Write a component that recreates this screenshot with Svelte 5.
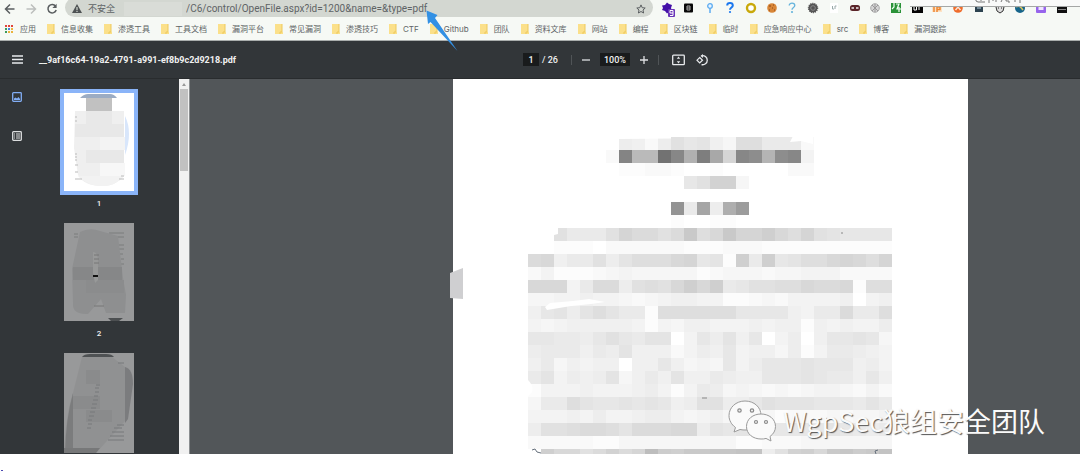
<script>
  const bookmarks = [
    '信息收集', '渗透工具', '工具文档', '漏洞平台', '常见漏洞', '渗透技巧', 'CTF', 'Github',
    '团队', '资料文库', '网站', '编程', '区块链', '临时', '应急响应中心', 'src', '博客', '漏洞跟踪'
  ];

  const appDots = ['#e0433a', '#e0433a', '#e0433a', '#3c9a5c', '#4a7fe0', '#eab33c', '#3c9a5c', '#eab33c', '#eab33c'];

  // Each character is a grey level; the step from one level to the next is 3.
  const levels = '0123456789abcdefghijklmnopqrstuvwxyzABCDEFGHIJKLMNOP';
  const CELL = 13;
  const rows = [
    '00000006526a8953bb7772000000',
    '0000002FnnLEqHteECpCE4000000',
    '0000000112210010000022000000',
    '0000000000008aff300000000000',
    '0000000000000000000000000000',
    '00000000000A7u6rx00000000000',
    '0000000000010011000000000000',
    '00a777aeccacibdieegdbea98888',
    '0011102222221112221111111111',
    'cd577a69bbbde891g7g89bbdedbe',
    '2411123433333123332334442222',
    'ddd47cc6abadgdg78aabbdccd1bb',
    '3344544323455441123244445045',
    '58969b9771bbbbbb88885477c77b',
    '4345555541435544454551545446',
    '887768a879904869580460588983',
    '6777576955524658455361477654',
    '5735455055853438468889888564',
    '7946569357595576558889877585',
    '1444544456414763432323443242',
    '377b988989856aa668a999888797',
    '4445464456643453213122232334',
    '6aabccb9cccdd698987888898767',
    '2222211333333333112223333333',
    '0gddacfcemhgiijjkk6afgdijhik'
  ];
  const cells = rows.flatMap((row, r) =>
    [...row]
      .map((c, i) => ({ x: 75 + i * CELL, y: 58 + r * CELL, v: 255 - 3 * levels.indexOf(c) }))
      .filter((c) => c.v < 255)
  );

  const extensions = [
    'tag', 'black', 'pin', 'help', 'ring', 'cookie', 'help2', 'gear', 'doc', 'mask',
    'globe', 'green', 'code', 'ip', 'fox', 'box', 'bug', 'swirl', 'purple', 'bar'
  ];
</script>

<div class="window">
  <header class="chrome">
    <div class="toolbar">
      <nav class="nav" aria-label="导航">
        <button aria-label="后退"><svg width="12" height="12" viewBox="0 0 12 12"><path d="M10.500 6H2M6 1.500 1.500 6 6 10.500" fill="none" stroke="#5a5e60" stroke-width="1.500" /></svg></button>
        <button aria-label="前进"><svg width="12" height="12" viewBox="0 0 12 12"><path d="M1.500 6H10M6 1.500 10.500 6 6 10.500" fill="none" stroke="#bcbfbd" stroke-width="1.500" /></svg></button>
        <button aria-label="刷新"><svg width="12" height="12" viewBox="0 0 12 12"><path d="M9.600 3.200A4.200 4.200 0 1 0 10.200 7" fill="none" stroke="#5a5e60" stroke-width="1.500" /><path d="M10.600.8v4.200H6.400z" fill="#5a5e60" /></svg></button>
      </nav>
      <div class="address">
        <svg width="10" height="9" viewBox="0 0 10 9"><path d="M5 0 10 9H0z" fill="#4d5153" /><path d="M4.400 3h1.200v3H4.400zM4.400 6.700h1.200v1.200H4.400z" fill="#d3d7d1" /></svg>
        <label for="url">不安全</label>
        <i class="smudge"></i>
        <input id="url" value="/C6/control/OpenFile.aspx?id=1200&name=&type=pdf" />
        <button class="star" aria-label="收藏"><svg width="10" height="10" viewBox="0 0 10 10"><path d="M5 .9 6.200 3.700l3 .3L7 6l.6 3L5 7.500 2.400 9 3 6 .8 4l3-.3z" fill="none" stroke="#5a5e60" /></svg></button>
      </div>
      <div class="extensions">
        {#each extensions as e}
          <button aria-label={e}>
            <svg width="16" height="17" viewBox="0 0 16 17">
              {#if e === 'tag'}
                <path d="M7 2.500 9 4l3 1-1 3 1 3-3 1-2 1.500L5 11 2 10l1-2-1-2.500L5 5z" fill="#4310a8" /><rect x="8" y="9" width="7" height="8" rx="1" fill="#6a36b8" /><path d="M13 13V10.500h-3V13h3v2.500h-3" fill="none" stroke="#fff" />
              {:else if e === 'black'}
                <rect x="3" y="3.500" width="9" height="9" rx="1" fill="#080808" /><path d="M6 6h3v4H6zM6 8h3" fill="none" stroke="#aaa" />
              {:else if e === 'pin'}
                <circle cx="8" cy="6" r="2.300" fill="#e8f4ff" stroke="#5cabf0" stroke-width="1.300" /><path d="M8 8.500V13" stroke="#5cabf0" stroke-width="1.500" />
              {:else if e === 'help' || e === 'help2'}
                <path d="M5.200 5.500C5.200 2.300 10.800 2.300 10.800 5.500 10.800 7.500 8 7.500 8 9.800" fill="none" stroke={e === 'help' ? '#1b77ee' : '#66b4dc'} stroke-width={e === 'help' ? 2 : 1.3} /><circle cx="8" cy="12" r="1.100" fill={e === 'help' ? '#1b77ee' : '#66b4dc'} />
              {:else if e === 'ring'}
                <circle cx="8" cy="8" r="4" fill="#fff" stroke="#c9a90b" stroke-width="2.400" />
              {:else if e === 'cookie'}
                <circle cx="8" cy="8" r="4.800" fill="#d88638" /><path d="M5 6h2M9 5h1M8 8h1M5 10h1M10 10h1" stroke="#8a4717" stroke-width="1.200" />
              {:else if e === 'gear'}
                <circle cx="8" cy="8" r="4.500" fill="#555" stroke="#555" stroke-dasharray="1 1" stroke-width="1.500" /><circle cx="8" cy="8" r="2.300" fill="none" stroke="#8a8a8a" />
              {:else if e === 'doc'}
                <rect x="4" y="3" width="8" height="10" fill="#fff" /><path d="M6.500 6v3H8M9 9V6h1.500" fill="none" stroke="#9aa" />
              {:else if e === 'mask'}
                <rect x="3" y="5" width="10" height="6" rx="2.500" fill="#5a2428" /><path d="M4.500 8h2.500M9 8h2.500" stroke="#eee" stroke-width="1.600" />
              {:else if e === 'globe'}
                <circle cx="8" cy="8" r="4.300" fill="#d5d5d5" stroke="#aaa" /><path d="M5 5l6 6M11 5l-6 6M8 4v8" stroke="#999" />
              {:else if e === 'green'}
                <rect x="3" y="3" width="10" height="10" fill="#2a9238" /><path d="M6 3v4l-2 2M8 4h3L9 9h4M11 7v5" fill="none" stroke="#f5fff5" stroke-width="1.200" />
              {:else if e === 'code'}
                <rect x="3" y="3" width="11" height="10" fill="#050505" /><path d="M5 6h2.500v4H5zM10 6v4" fill="none" stroke="#fff" />
              {:else if e === 'ip'}
                <rect x="3" y="5" width="10" height="7" fill="#fde2c4" /><path d="M5 6v6M8 12V7h3v2.500H8" fill="none" stroke="#ed8733" stroke-width="1.500" />
              {:else if e === 'fox'}
                <circle cx="8" cy="8" r="4.800" fill="#ef6c2b" /><path d="M5.500 10 8 7l2.500 3" fill="none" stroke="#ffe4d4" stroke-width="1.400" />
              {:else if e === 'box'}
                <rect x="4" y="4" width="8" height="8" fill="#2d4350" /><path d="M6 8h4" stroke="#8fa6b3" stroke-width="1.500" />
              {:else if e === 'bug'}
                <path d="M4 7l1.500-1h5L12 7l-1 4-3 2-3-2z" fill="#ddd" stroke="#333" /><path d="M6 8h1M9 8h1" stroke="#222" />
              {:else if e === 'swirl'}
                <circle cx="8" cy="8" r="5" fill="#17658b" /><path d="M4 7c3-2 5 0 7 3" fill="none" stroke="#d8c45a" stroke-width="1.500" />
              {:else if e === 'purple'}
                <rect x="3" y="3" width="10" height="10" rx="1" fill="#9764ec" /><rect x="5.500" y="6" width="5" height="4" fill="#efe5ff" />
              {:else}
                <rect x="3" y="4" width="10" height="9" fill="#111" /><path d="M4 9.500h8" stroke="#888" />
              {/if}
            </svg>
          </button>
        {/each}
      </div>
    </div>
    <nav class="bookmarks" aria-label="书签">
      <a href="#apps" class="apps"><span class="dots">{#each appDots as d}<i style="background:{d}"></i>{/each}</span>应用</a>
      {#each bookmarks as b}
        <a href="#bookmark">
          <svg width="8" height="10" viewBox="0 0 8 10"><path d="M0 0h7v8h1v2H0z" fill="#fbe08a" /><path d="M5 10V8h2V0" fill="none" stroke="#edc95c" /></svg>{b}</a>
      {/each}
    </nav>
  </header>

  <div class="popup">
    <svg width="48" height="3" viewBox="0 0 48 3"><path d="M1 0v1l2 1h7M6 0v1M14 0v3M18 0v1M21 0v2M27 0l-1 2M31 0v1h3v2M40 0v2M45 0v3" fill="none" stroke="#777" /></svg>
  </div>

  <div class="viewer">
    <div class="bar">
      <div class="title">
        <button aria-label="菜单"><svg width="11" height="9" viewBox="0 0 11 9"><path d="M0 1h11M0 4.500h11M0 8h11" stroke="#e8eaed" stroke-width="1.300" /></svg></button>
        <h1>__9af16c64-19a2-4791-a991-ef8b9c2d9218.pdf</h1>
      </div>
      <div class="controls">
        <input class="num" aria-label="页码" value="1" />
        <span class="total">/ 26</span>
        <i class="divider"></i>
        <button aria-label="缩小"><svg width="10" height="10" viewBox="0 0 10 10"><path d="M1 5h8" stroke="#dfe1e3" stroke-width="1.300" /></svg></button>
        <input class="zoom" aria-label="缩放" value="100%" />
        <button aria-label="放大"><svg width="10" height="10" viewBox="0 0 10 10"><path d="M1 5h8M5 1v8" stroke="#dfe1e3" stroke-width="1.300" /></svg></button>
        <i class="divider"></i>
        <button class="fit" aria-label="适合页面"><svg width="13" height="12" viewBox="0 0 13 12"><rect x=".7" y="1.200" width="11.600" height="9.500" rx=".8" fill="none" stroke="#e8eaed" stroke-width="1.300" /><path d="M6.500 2.500 8.200 4.700H4.800zM6.500 9.500 8.200 7.300H4.800z" fill="#e8eaed" /></svg></button>
        <button class="rotate" aria-label="旋转"><svg width="13" height="12" viewBox="0 0 13 12"><path d="M3.700 3.500 6.500 6.200 3.700 9 1 6.200z" fill="none" stroke="#e8eaed" stroke-width="1.200" /><path d="M5.500 1.700A4.600 4.600 0 1 1 5.500 10.600" fill="none" stroke="#e8eaed" stroke-width="1.300" /><path d="M7 0v4L4.500 2z" fill="#e8eaed" /></svg></button>
      </div>
    </div>

    <div class="body">
      <aside>
        <div class="modes">
          <button aria-label="缩略图"><svg width="10" height="10" viewBox="0 0 10 10"><rect x=".7" y=".7" width="8.600" height="8.600" rx=".8" fill="none" stroke="#82aef5" stroke-width="1.300" /><path d="M2 8V6.500l1.500-1 1.500 1L6.500 5 8 7v1z" fill="#82aef5" /></svg></button>
          <button aria-label="目录"><svg width="10" height="10" viewBox="0 0 10 10"><rect x=".7" y=".7" width="8.600" height="8.600" rx=".8" fill="none" stroke="#dcdedf" stroke-width="1.300" /><path d="M2 3h1M4 3h4M2 5h1M4 5h4M2 7h1M4 7h4" stroke="#dcdedf" stroke-width="1.200" /></svg></button>
        </div>
        <div class="thumbs">
          <figure class="active">
            <svg width="70" height="98" viewBox="0 0 70 98">
              <rect width="70" height="98" fill="#fff" />
              <path d="M16 5Q20 1 24 1H46Q50 1 53 5z" fill="#9cacc3" />
              <rect x="22" y="5" width="26" height="14" fill="#c1c1c1" />
              <path d="M61 23q4 8 4 18t-4 21z" fill="#d8e6fb" />
              <path d="M11 18H60V83Q52 93 38 93 20 93 14 82L10 55z" fill="#efefef" />
              <path d="M11 31h49v13H11zM22 57h38v13H22zM22 18h26v13H22z" fill="#e8e8e8" />
              <path d="M36 44h25v13H36z" fill="#f3f3f3" /><path d="M36 70h25v13H36z" fill="#f7f7f7" />
              <path d="M14 83h46q-8 10-22 10T14 83z" fill="#f2f2f2" />
              <path d="M11 24h2M11 28h2M11 61h2M11 64h2M11 67h2M11 72h3M11 79h3M11 86h7M55 86h5M57 83h3" stroke="#bbb" />
            </svg>
            <figcaption>1</figcaption>
          </figure>
          <figure>
            <svg width="70" height="98" viewBox="0 0 70 98">
              <rect width="70" height="98" fill="#98999a" />
              <path d="M10 11h4M10 14h4M45 10h15M51 14h9M55 22h5M55 26h5M56 31h3M57 36h3M57 41h3" stroke="#7b7c7d" />
              <path d="M16 9Q26 4 36 8L54 13 59 55 62 72 61 90H42L37 76 24 91Q8 92 9 80L8 46z" fill="#8e8f90" />
              <path d="M9 44H58V57H9z" fill="#868788" /><path d="M22 70H60V57H22z" fill="#8b8c8d" />
              <path d="M29 29q5 0 5 10v18l-3 3-2-10z" fill="#989999" />
              <path d="M30 32h5M30 36h5M30 40h5M30 83h10" stroke="#777" /><rect x="29" y="52" width="5" height="2" fill="#111" />
              <path d="M44 95h15l-4 3h-8z" fill="#4c4f51" />
            </svg>
            <figcaption>2</figcaption>
          </figure>
          <figure>
            <svg width="70" height="100" viewBox="0 0 70 100">
              <rect width="70" height="100" fill="#98999a" />
              <path d="M18 4Q20 1 26 1h16q6 0 8 3z" fill="#4f5254" />
              <path d="M18 4H48L61 14V68L32 100H0Q2 60 9 40z" fill="#909192" />
              <path d="M9 40V100H1Q2 65 9 40z" fill="#7b7c7d" />
              <path d="M61 14q8 2 8 17l-5 35-3 4z" fill="#7b7c7e" />
              <path d="M22 17h14v14H22zM9 43h27v13H9zM22 57h26v12H22z" fill="#8a8b8c" />
              <path d="M32 32h4M31 35h4M31 39h4M30 43h4M29 47h5M28 51h5M27 55h5M26 59h5M25 63h5M24 67h4M24 71h4M23 75h4M54 10h6M53 72h7M50 75h8M48 79h12M46 83h14M44 87h16" stroke="#77787a" />
              <path d="M0 95h36l-4 5H0z" fill="#777879" />
            </svg>
          </figure>
        </div>
        <div class="scroll"><svg width="10" height="10" viewBox="0 0 10 10"><path d="M5 4 7 7H3z" fill="#999" /></svg><i></i></div>
      </aside>

      <main>
        <svg class="page" viewBox="0 0 515 375" preserveAspectRatio="xMidYMin slice">
          <rect width="515" height="375" fill="#fff" />
          {#each cells as c}
            <rect x={c.x} y={c.y} width={CELL} height={CELL} fill="rgb({c.v},{c.v},{c.v})" />
          {/each}
          <path d="M165 57H218V59.500L166 60zM340 57H360V65L348 62 337 63z" fill="#fff" />
          <path d="M92 228 97 224 120 222 136 220 152 223 138 225 118 227 94 231z" fill="#fff" />
          <path d="M101 149h4v6l-4 1zM75 301q6 6 4 12l-4 4z" fill="#fff" />
          <path d="M-3 194 10 189V220L-3 219z" fill="#cfcfd1" />
          <path d="M79 371l3-1 2 3 4 1M425 371l-3 1 1 3" fill="none" stroke="#66707c" />
          <path d="M388 154h2M249 319h5" stroke="#888" />
        </svg>
      </main>
    </div>

    <div class="watermark">
      <svg width="48" height="42" viewBox="0 0 48 42">
        <path d="M17 1C8 1 1 7.500 1 15.500c0 5 2.500 9 6.500 12L6 32l6-2.500c2 .5 4 .5 6 .5 8-1 15-6 15-14.500S26 1 17 1z" fill="#fafafa" stroke="#9a9a9a" />
        <path d="M33 14c-8 0-14.500 5-14.500 12.500S25 39 33 39c2 0 3.500 0 5-.6l5 2.600-1-4.500c3.500-2.500 5.500-6 5.500-10C47.500 19 41 14 33 14z" fill="#fafafa" stroke="#9a9a9a" />
        <g fill="#eee" stroke="#8a8a8a" stroke-width="1.200"><circle cx="11.500" cy="10.500" r="1.700" /><circle cx="24" cy="10.500" r="1.700" /><circle cx="28" cy="22" r="1.500" /><circle cx="38" cy="22" r="1.500" /></g>
      </svg>
      <span>WgpSec狼组安全团队</span>
    </div>
  </div>

  <footer><i></i></footer>

  <svg class="arrow" width="32" height="42" viewBox="0 0 32 42"><path d="M.5.5 11.500 5 9 8 31.500 41 4.500 12 2 14z" fill="#3290e4" /></svg>
</div>

<style>
  :global(body) { margin: 0; background: #fff; }
  .window { position: relative; height: 100vh; display: flex; flex-direction: column; overflow: hidden; font-family: "Noto Sans", "Noto Sans CJK SC", sans-serif; }
  button { display: flex; align-items: center; justify-content: center; padding: 0; border: 0; background: none; }
  input { box-sizing: border-box; padding: 0; border: 0; background: none; outline: 0; font-family: inherit; }
  svg { display: block; flex: none; }

  .chrome { flex: none; background: #f6f9f5; border-bottom: 1px solid #aaaead; }
  .toolbar { display: flex; height: 17px; align-items: center; }
  .nav { display: flex; gap: 9px; padding: 0 7px 0 4px; }
  .address { flex: 586 1 0; display: flex; align-items: center; height: 19px; margin-top: -2px; box-sizing: border-box; padding: 2px 7px 0 7px; border-radius: 10px; background: #d3d7d1; color: #5f6466; }
  .address label { margin-left: 6px; font-size: 9px; white-space: nowrap; }
  .smudge { width: 58px; height: 14px; margin: 0 4px 0 9px; background: #d9dcd7; }
  .address input { flex: 1; min-width: 0; height: 15px; font-family: Roboto, sans-serif; font-size: 10px; color: #5f6466; }
  .extensions { flex: 423 1 0; display: grid; grid-template-columns: repeat(20, 1fr); padding: 0 8px 0 5px; }

  .bookmarks { display: flex; gap: 11px; height: 23px; align-items: center; padding-left: 5px; overflow: hidden; font-family: Inter, "Noto Sans CJK SC", sans-serif; }
  .bookmarks a { display: flex; align-items: center; gap: 6px; color: #606466; text-decoration: none; font-size: 8px; line-height: 12px; white-space: nowrap; }
  .dots { display: grid; grid-template-columns: repeat(3, 2px); gap: 1px; width: 9px; }
  .dots i { height: 2px; }

  .popup { position: absolute; top: 0; right: 0; width: 105px; height: 6px; padding-left: 65px; background: #f9faf9; border-bottom: 1px solid #a5a7a6; }

  .viewer { position: relative; flex: 1; min-height: 0; display: flex; flex-direction: column; background: #525659; }
  .bar { flex: none; display: grid; grid-template-columns: 523fr auto 371fr; align-items: center; height: 37px; background: #323639; border-bottom: 1px solid #292c2e; color: #f1f1f1; font-family: Roboto, sans-serif; }
  .title { display: flex; align-items: center; gap: 16px; padding-left: 12px; }
  h1 { margin: 0; font-size: 9px; line-height: 12px; font-weight: 700; white-space: nowrap; }
  .controls { display: flex; align-items: center; }
  .controls input { height: 13px; background: #191b1c; color: #f1f1f1; text-align: center; font-size: 9px; font-weight: 500; }
  .num { width: 16px; }
  .zoom { width: 30px; margin: 0 9px; }
  .total { margin-left: 3px; font-size: 9px; line-height: 12px; font-weight: 500; white-space: nowrap; }
  .divider { width: 1px; height: 10px; margin: 0 9px; background: #505457; }
  .divider:first-of-type { margin-left: 13px; }
  .fit { margin-left: 4px; }
  .rotate { margin-left: 11px; }

  .body { flex: 1; min-height: 0; display: flex; }
  aside { flex: none; display: flex; width: 190px; background: #323639; overflow: hidden; }
  .modes { width: 34px; display: flex; flex-direction: column; align-items: center; gap: 29px; padding-top: 13px; }
  .thumbs { flex: 1; display: flex; flex-direction: column; align-items: center; padding: 14px 15px 0 0; }
  figure { flex: none; height: 130px; margin: 0; }
  figure.active svg { outline: 4px solid #8ab4f8; }
  figcaption { padding-top: 7px; text-align: center; color: #f1f1f1; font: 500 8px/12px Roboto, sans-serif; }
  .scroll { width: 10px; background: #f1f1f1; border-right: 1px solid #8b8e90; }
  .scroll i { display: block; height: 82px; margin: 0 1px; background: #c1c1c1; }

  main { flex: 1; min-width: 0; display: grid; grid-template-columns: 263fr 515fr 112fr; overflow: hidden; }
  .page { grid-column: 2; width: 100%; height: 100%; overflow: visible; }

  .watermark { position: absolute; right: 35px; bottom: 12px; display: flex; align-items: center; gap: 7px; color: #fafafa; font: 27px/42px "Noto Sans CJK SC", sans-serif; white-space: nowrap; }
  .watermark span { text-shadow: 1px 1px 1px #555; }

  footer { flex: none; display: flex; align-items: flex-end; height: 17px; background: #fff; }
  footer i { width: 2px; height: 1px; margin-left: 1px; background: #4b48b0; }

  .arrow { position: absolute; left: 426px; top: 10px; }
</style>
